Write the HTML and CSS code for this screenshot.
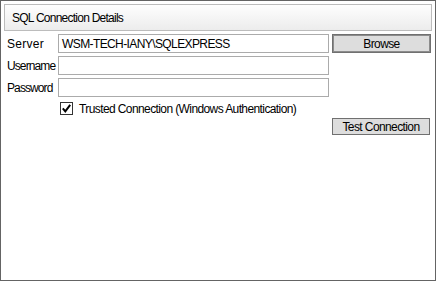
FILE: index.html
```html
<!DOCTYPE html>
<html>
<head>
<meta charset="utf-8">
<link rel="stylesheet" href="styles.css">
</head>
<body>
<div class="frame">
  <div class="header">SQL Connection Details</div>
  <div class="form">
    <div class="row">
      <span class="label label-wide">Server</span>
      <div class="input">WSM-TECH-IANY\SQLEXPRESS</div>
      <div class="btn btn-default">Browse</div>
    </div>
    <div class="row">
      <span class="label label-tight">Username</span>
      <div class="input"></div>
    </div>
    <div class="row">
      <span class="label label-tight">Password</span>
      <div class="input"></div>
    </div>
    <div class="check-row">
      <span class="checkbox">
        <svg width="13" height="13" viewBox="0 0 13 13">
          <rect x="0.5" y="0.5" width="12" height="12" fill="#fff" stroke="#333"/>
          <path d="M2.8 6.3 L5.3 9.3 L10.2 2.8" fill="none" stroke="#000" stroke-width="2"/>
        </svg>
      </span>
      <span class="check-label">Trusted Connection (Windows Authentication)</span>
    </div>
    <div class="test-row">
      <div class="btn btn-test">Test Connection</div>
    </div>
  </div>
</div>
</body>
</html>
```
FILE: styles.css
```css
html, body {
  margin: 0;
  padding: 0;
  background: #ffffff;
}
.frame {
  width: 436px;
  height: 281px;
  box-sizing: border-box;
  border: 1px solid #646464;
  padding: 3px;
  font-family: "Liberation Sans", Arial, sans-serif;
  font-size: 12px;
  letter-spacing: -0.6px;
  color: #000;
}
.header {
  height: 27px;
  box-sizing: border-box;
  border: 1px solid #bcbcbc;
  background: linear-gradient(#fefefe, #ececec);
  padding-left: 7px;
  display: flex;
  align-items: center;
  letter-spacing: -0.75px;
}
.form {
  display: flex;
  flex-direction: column;
  padding-top: 3px;
}
.row {
  display: flex;
  align-items: center;
  height: 19px;
  margin-bottom: 3px;
}
.label {
  width: 51px;
  padding-left: 3px;
  flex: none;
}
.label-wide {
  letter-spacing: 0.3px;
}
.label-tight {
  letter-spacing: -0.9px;
}
.input {
  width: 271px;
  height: 19px;
  box-sizing: border-box;
  border: 1px solid #ababab;
  padding-left: 3px;
  display: flex;
  align-items: center;
  flex: none;
}
.btn {
  box-sizing: border-box;
  background: #dddddd;
  border: 1px solid #707070;
  display: flex;
  align-items: center;
  justify-content: center;
  flex: none;
}
.btn-default {
  width: 99px;
  height: 19px;
  margin-left: 3px;
  box-shadow: inset 0 0 0 1px #8c8c8c;
}
.check-row {
  display: flex;
  align-items: center;
  height: 13px;
  margin-top: 2px;
  padding-left: 56px;
}
.checkbox {
  width: 13px;
  height: 13px;
  display: block;
  flex: none;
}
.checkbox svg {
  display: block;
}
.check-label {
  margin-left: 6px;
}
.test-row {
  display: flex;
  justify-content: flex-end;
  padding-right: 2px;
  margin-top: 3px;
}
.btn-test {
  width: 98px;
  height: 17px;
}
```
